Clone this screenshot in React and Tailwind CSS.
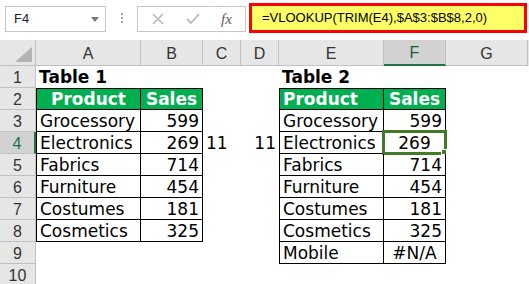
import React from "react";

const W = ["w-[105px]", "w-[62px]", "w-[38px]", "w-[38px]", "w-[105px]", "w-[62px]", "w-[82px]"];
const LETTERS = ["A", "B", "C", "D", "E", "F", "G"];

const table1 = [
  ["Grocessory", "599"],
  ["Electronics", "269"],
  ["Fabrics", "714"],
  ["Furniture", "454"],
  ["Costumes", "181"],
  ["Cosmetics", "325"],
];

// build the sheet rows, one array of 7 cells per row
const buildRows = () => {
  const rows = [];
  rows.push([
    { t: "Table 1", k: "title" }, null, null, null,
    { t: "Table 2", k: "title" }, null, null,
  ]);
  rows.push([
    { t: "Product", k: "head", a: "c", first: true, top: true },
    { t: "Sales", k: "head", a: "c", top: true },
    null, null,
    { t: "Product", k: "head", a: "l", first: true, top: true },
    { t: "Sales", k: "head", a: "c", top: true },
    null,
  ]);
  table1.forEach(([name, val], i) => {
    const r = i + 3;
    rows.push([
      { t: name, k: "body", first: true },
      { t: val, k: "body", a: "r" },
      r === 4 ? { t: "11", a: "l" } : null,
      r === 4 ? { t: "11", a: "r" } : null,
      { t: name, k: "body", first: true },
      r === 4 ? { t: val, k: "body", a: "c", active: true } : { t: val, k: "body", a: "r" },
      null,
    ]);
  });
  rows.push([
    null, null, null, null,
    { t: "Mobile", k: "body", first: true },
    { t: "#N/A", k: "body", a: "c" },
    null,
  ]);
  rows.push([null, null, null, null, null, null, null]);
  return rows;
};

const Cell = ({ w, c }) => {
  let cls = `${w} h-full shrink-0 flex items-center px-[3px] pt-[2px] relative`;
  if (!c) return <div className={cls} />;
  if (c.k === "head") cls += " bg-[#00b050] text-white font-bold";
  if (c.k === "title") cls += " font-bold text-black whitespace-nowrap overflow-visible";
  if (c.k === "head" || c.k === "body") cls += " border-r border-b border-black";
  if (c.first) cls += " border-l";
  if (c.top) cls += " border-t";
  if (c.a === "r") cls += " justify-end";
  else if (c.a === "c") cls += " justify-center";
  else cls += " justify-start";
  return (
    <div className={cls}>
      <span className="whitespace-nowrap">{c.t}</span>
      {c.active && (
        <div className="absolute -left-[2px] -right-[2px] -top-[2px] -bottom-[2px] border-[3px] border-[#427a26]">
          <div className="absolute -right-[3px] -bottom-[3px] w-[6px] h-[6px] bg-[#427a26] border border-white" />
        </div>
      )}
    </div>
  );
};

const Toolbar = () => (
  <div className="h-[40px] flex items-start bg-white" style={{ fontFamily: "'Liberation Sans', Arial, sans-serif" }}>
    <div className="ml-[5px] mt-[6px] w-[101px] h-[26px] border border-[#c6c6c6] bg-white flex items-center justify-between pl-[8px] pr-[6px]">
      <span className="text-[13px] text-[#222]">F4</span>
      <svg width="8" height="5" viewBox="0 0 8 5">
        <path d="M0 0 L8 0 L4 5 Z" fill="#7a7a7a" />
      </svg>
    </div>
    <div className="w-[31px] h-[40px] flex flex-col items-center pt-[13px] gap-[2px]">
      <div className="w-[2px] h-[2px] bg-[#a0a0a0]" />
      <div className="w-[2px] h-[2px] bg-[#a0a0a0]" />
      <div className="w-[2px] h-[2px] bg-[#a0a0a0]" />
    </div>
    <div className="mt-[6px] w-[109px] h-[26px] border border-[#c6c6c6] bg-white flex items-center">
      <div className="w-[40px] flex justify-center">
        <svg width="12" height="12" viewBox="0 0 12 12">
          <path d="M1 1 L11 11 M11 1 L1 11" stroke="#b8b8b8" strokeWidth="1.6" />
        </svg>
      </div>
      <div className="w-[30px] flex justify-center">
        <svg width="14" height="12" viewBox="0 0 14 12">
          <path d="M1 6 L5 10 L13 1" stroke="#b8b8b8" strokeWidth="1.8" fill="none" />
        </svg>
      </div>
      <div className="flex-1 flex justify-center">
        <span className="italic text-[15px] text-[#5a5a5a]" style={{ fontFamily: "'Liberation Serif', serif" }}>fx</span>
      </div>
    </div>
    <div className="ml-[3px] mt-[3px] w-[278px] h-[30px] border-[3px] border-[#ff0000] bg-[#ffff66] flex items-center pl-[10px]">
      <span className="text-[13px] text-black whitespace-nowrap">=VLOOKUP(TRIM(E4),$A$3:$B$8,2,0)</span>
    </div>
  </div>
);

const App = () => {
  const rows = buildRows();
  return (
    <div className="w-[529px] h-[284px] overflow-hidden bg-white">
      <Toolbar />
      {/* column headers */}
      <div className="h-[26px] flex bg-[#e6e6e6] text-[16px] text-[#333]" style={{ fontFamily: "'Liberation Sans', Arial, sans-serif" }}>
        <div className="w-[36px] h-full shrink-0 border-r border-b border-[#c0c0c0] flex items-end justify-end pr-[3px] pb-[3px]">
          <svg width="17" height="15" viewBox="0 0 17 15">
            <path d="M17 0 L17 15 L0 15 Z" fill="#b4b4b4" />
          </svg>
        </div>
        {LETTERS.map((l, i) =>
          l === "F" ? (
            <div key={l} className={`${W[i]} h-full shrink-0 bg-[#d2d2d2] border-r border-[#c0c0c0] border-b-2 border-b-[#217346] flex items-center justify-center pt-[2px] text-[#1e5e38]`}>
              {l}
            </div>
          ) : (
            <div key={l} className={`${W[i]} h-full shrink-0 border-r border-b border-[#c0c0c0] flex items-center justify-center pt-[2px]`}>
              {l}
            </div>
          )
        )}
      </div>
      {/* sheet rows */}
      {rows.map((cells, ri) => (
        <div key={ri} className="h-[22px] flex text-[17px] text-black" style={{ fontFamily: "'DejaVu Sans', Verdana, sans-serif" }}>
          {ri === 3 ? (
            <div className="w-[36px] h-full shrink-0 bg-[#d2d2d2] border-r-2 border-r-[#217346] border-b border-b-[#c0c0c0] flex items-center justify-center pt-[2px] text-[16px] text-[#217346]" style={{ fontFamily: "'Liberation Sans', Arial, sans-serif" }}>
              {ri + 1}
            </div>
          ) : (
            <div className="w-[36px] h-full shrink-0 bg-[#e6e6e6] border-r border-b border-[#c0c0c0] flex items-center justify-center pt-[2px] text-[16px] text-[#333]" style={{ fontFamily: "'Liberation Sans', Arial, sans-serif" }}>
              {ri + 1}
            </div>
          )}
          {cells.map((c, ci) => (
            <Cell key={ci} w={W[ci]} c={c} />
          ))}
        </div>
      ))}
    </div>
  );
};

export default App;
